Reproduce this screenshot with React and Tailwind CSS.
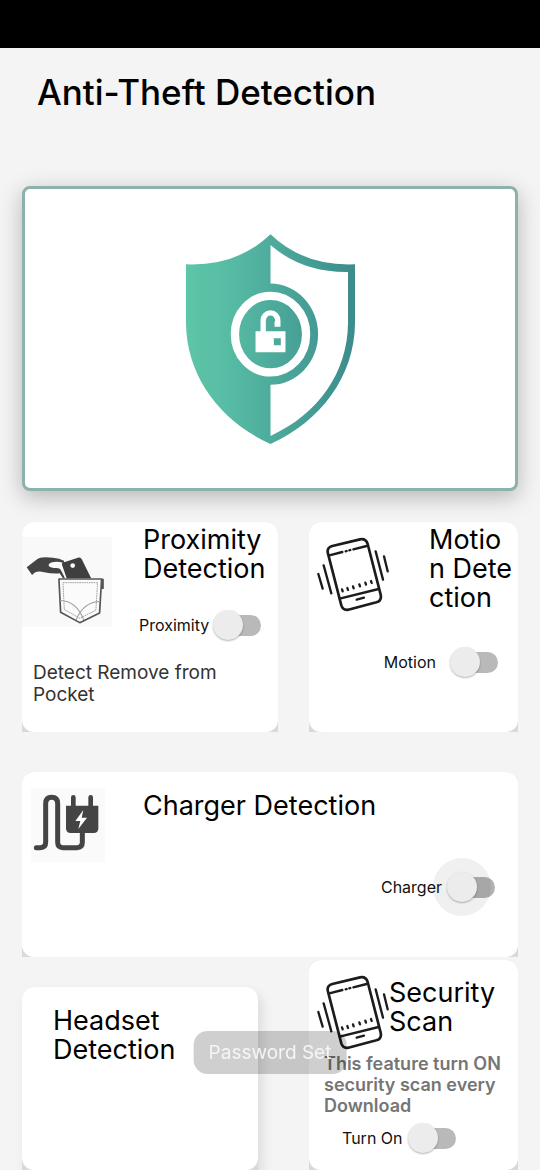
import React from "react";

function ShieldIcon() {
  return (
    <svg viewBox="70 35 520 640" className="h-[213px] w-[173px]" aria-hidden="true">
      <defs>
        <linearGradient id="shieldFill" x1="0" x2="1" y1="0" y2="0">
          <stop offset="0" stopColor="#5dc5a8" />
          <stop offset="0.25" stopColor="#57bca4" />
          <stop offset="0.6" stopColor="#4aa599" />
          <stop offset="1" stopColor="#3b8c8c" />
        </linearGradient>
      </defs>
      <path
        d="M330 42 Q430 138 584 132 V310 C582 470 480 605 330 672 C180 605 78 470 76 310 V132 Q230 138 330 42Z"
        fill="url(#shieldFill)"
      />
      <path
        d="M330 74 Q425 157 563 155 V310 C561 458 474 582 330 648 V494 A143 152 0 0 0 330 190Z"
        fill="#fff"
      />
      <ellipse cx="330" cy="342" rx="107" ry="115" fill="none" stroke="#fff" strokeWidth="25" />
      <path d="M308 336 V301 A22 23 0 0 1 352 301 V312 H342" fill="none" stroke="#fff" strokeWidth="16" />
      <path d="M285 333 H375 V396 H285Z M340 354 V375 H361 V354Z" fill="#fff" fillRule="evenodd" />
    </svg>
  );
}

function PocketIcon() {
  return (
    <svg viewBox="38 82 268 268" className="mt-[15px] size-[90px] shrink-0 bg-[#f9f9f9]" aria-hidden="true">
      <path
        d="M52 172 L82 149 Q90 142 108 142 L130 144 Q150 146 163 153 L164 160 Q143 153 128 157 Q114 162 118 168 Q124 174 140 174 Q154 175 158 184 L166 204 L160 205 L150 190 Q130 192 104 187 Q88 182 76 188 L68 195Z"
        fill="#444"
      />
      <path d="M153 176 L167 203" stroke="#f9f9f9" strokeWidth="3" />
      <path d="M157 165 Q155 160 161 158 L207 143 Q213 142 216 148 L244 205 H171Z" fill="#3f3f3f" />
      <circle cx="189" cy="167" r="7" fill="#f9f9f9" />
      <path d="M274 208 H280 V235 H273" fill="#555" stroke="#555" strokeWidth="3" />
      <path d="M148 207 H275 L269 308 L210 337 L153 306Z" fill="#fbfbfb" stroke="#555" strokeWidth="5" strokeLinejoin="round" />
      <path d="M160 218 H263 L258 300 L210 324 L164 298Z" fill="none" stroke="#777" strokeWidth="2" strokeDasharray="5 2" />
      <path d="M151 271 Q200 272 222 329 M271 274 Q222 274 199 329" fill="none" stroke="#999" strokeWidth="3" />
    </svg>
  );
}

function PhoneIcon() {
  return (
    <svg
      viewBox="45 80 222 225"
      className="ml-[6px] mt-[15px] h-[75px] w-[74px] shrink-0"
      fill="none"
      stroke="#1c1c1c"
      strokeWidth="8"
      strokeLinecap="round"
      aria-hidden="true"
    >
      <path d="M84 130 Q79 112 97 107 L180 87 Q198 84 203 101 L242 253 Q246 271 229 276 L145 298 Q129 301 124 285Z" />
      <path d="M88 135 L127 125 M137 123 L140 122 M148 120 L151 119 M160 117 L200 107" strokeWidth="7" />
      <path d="M119 265 L236 236 M170 268 L192 262" strokeWidth="7" />
      <path d="M126 237 L128 243 M142 233 L144 239 M159 228 L161 234 M178 222 L180 228 M196 217 L198 223 M213 212 L215 218" strokeWidth="7" />
      <path d="M55 191 L68 235 M71 165 L94 249 M227 123 L249 208 M252 138 L263 183" strokeWidth="7" />
    </svg>
  );
}

function ChargerIcon() {
  return (
    <svg viewBox="62 84 222 222" className="ml-[9px] mt-4 size-[74px] shrink-0 bg-[#fafafa]" aria-hidden="true">
      <path
        d="M78 263 H90 Q106 263 106 247 V131 Q106 112 124 112 Q142 112 142 131 V247 Q142 263 158 263 H200 Q216 263 216 247 V216"
        fill="none"
        stroke="#444"
        strokeWidth="15"
        strokeLinecap="round"
      />
      <path d="M189 140 V112 M241 140 V112" stroke="#444" strokeWidth="14" strokeLinecap="round" />
      <path d="M167 137 H264 V205 Q264 219 250 219 H181 Q167 219 167 205Z" fill="#444" />
      <path d="M219 150 L195 183 H210 L204 207 L230 173 H214Z" fill="#fff" />
    </svg>
  );
}

function Card({ outer = "", className = "", children }) {
  return (
    <section className={`flex flex-col rounded-t-xl bg-[#d9d9d9] ${outer}`}>
      <div className={`grow rounded-xl bg-white ${className}`}>{children}</div>
    </section>
  );
}

function CardTitle({ className = "", children }) {
  return <h2 className={`text-[27px] leading-[29px] text-black ${className}`}>{children}</h2>;
}

function Toggle({ label, className = "", pressed = false }) {
  return (
    <label className={`flex items-center text-base leading-5 text-[#111] ${className}`}>
      <span className="relative z-10">{label}</span>
      <input
        type="checkbox"
        role="switch"
        className={`relative grid h-[30px] w-12 shrink-0 appearance-none items-center before:z-10 before:col-start-1 before:row-start-1 before:size-[30px] before:rounded-full before:bg-[#ececec] before:content-[''] after:col-start-1 after:row-start-1 after:ml-2 after:h-[21px] after:rounded-full after:content-[''] checked:before:justify-self-end ${
          pressed
            ? "before:shadow-[0_1px_2px_rgba(0,0,0,0.3),0_0_0_14px_rgba(0,0,0,0.06)] after:bg-[#b2b2b2]"
            : "before:shadow-[0_1px_2px_rgba(0,0,0,0.3)] after:bg-[#b9b9b9]"
        }`}
      />
    </label>
  );
}

export default function App() {
  return (
    <div className="min-h-screen overflow-x-hidden bg-[#f4f4f4] font-['Inter','Liberation_Sans',sans-serif]">
      <div className="h-12 bg-black" />
      <header className="px-[37px] pt-6">
        <h1 className="text-[35px] font-medium leading-10 text-black">Anti-Theft Detection</h1>
      </header>

      <main className="px-[22px] pt-[74px]">
        <section className="flex justify-center rounded-lg border-3 border-[#8db1ac] bg-white py-[43px] shadow-[0_6px_22px_rgba(0,0,0,0.26)]">
          <ShieldIcon />
        </section>

        <div className="mt-[31px] grid grid-cols-[256fr_209fr] gap-[31px]">
          <Card className="pb-[26px]">
            <div className="flex">
              <PocketIcon />
              <div className="ml-[27px] pt-[3px]">
                <CardTitle className="pl-1">Proximity Detection</CardTitle>
                <Toggle label="Proximity" className="mt-[27px] gap-1" />
              </div>
            </div>
            <p className="mt-[22px] px-[11px] text-[19px] leading-[22px] text-[#333]">
              Detect Remove from Pocket
            </p>
          </Card>

          <Card>
            <div className="flex">
              <PhoneIcon />
              <CardTitle className="ml-10 mr-1 grow pt-[3px] break-all">Motion Detection</CardTitle>
            </div>
            <Toggle label="Motion" className="mt-[35px] justify-end gap-[14px] pr-5" />
          </Card>
        </div>

        <Card outer="mt-10" className="pb-[55px]">
          <div className="flex">
            <ChargerIcon />
            <CardTitle className="ml-[38px] mt-[19px]">Charger Detection</CardTitle>
          </div>
          <Toggle label="Charger" pressed className="mt-[10px] justify-end gap-[5px] pr-[23px]" />
        </Card>

        <div className="mt-[3px] grid grid-cols-[236fr_209fr] gap-[51px]">
          <Card outer="mt-[27px] shadow-[4px_6px_12px_rgba(0,0,0,0.1)]" className="px-[31px] pt-[19px]">
            <CardTitle>Headset Detection</CardTitle>
          </Card>

          <Card className="pb-[17px]">
            <div className="flex">
              <PhoneIcon />
              <CardTitle className="pt-[18px]">Security Scan</CardTitle>
            </div>
            <p className="mt-[3px] pl-[15px] text-lg leading-[21px] font-semibold text-[#757575]">
              This feature turn ON security scan every Download
            </p>
            <Toggle label="Turn On" className="mt-[7px] gap-[5px] pl-[33px]" />
          </Card>
        </div>
      </main>

      <div
        role="status"
        className="fixed bottom-24 left-1/2 z-20 -translate-x-1/2 rounded-[14px] bg-black/19 px-[15px] py-[10px] text-[19px] leading-[23px] whitespace-nowrap text-[#f5f5f5]"
      >
        Password Set
      </div>
    </div>
  );
}
